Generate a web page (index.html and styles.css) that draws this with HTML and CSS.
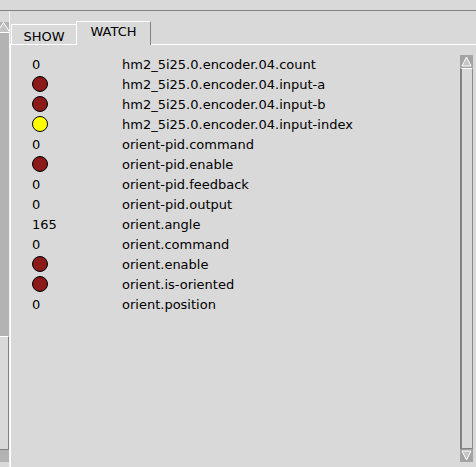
FILE: index.html
```html
<!DOCTYPE html>
<html lang="en">
<head>
<meta charset="UTF-8" />
<title>HAL Watch</title>
<link rel="stylesheet" href="styles.css">
</head>
<body>

<!-- Top strip -->
<div class="topbar"></div>

<div class="main">
  <!-- Left scrollbar (cut off) -->
  <div class="lscroll">
    <svg class="larrow" width="9" height="11" viewBox="0 0 9 11">
      <polygon points="3.5,0.5 -3,10.5 10,10.5" fill="#c4c4c4" stroke="#fff" stroke-width="1"/>
    </svg>
    <div class="ltrough">
      <div class="lslider"></div>
    </div>
    <div class="ldown"></div>
  </div>

  <!-- Notebook -->
  <div class="notebook">
    <div class="tabs">
      <div class="tab">SHOW</div>
      <div class="tab active">WATCH</div>
    </div>
    <div class="panel">
      <div class="list">
        <div class="row"><span class="val">0</span><span class="name">hm2_5i25.0.encoder.04.count</span></div>
        <div class="row"><span class="val"><i class="led red"></i></span><span class="name">hm2_5i25.0.encoder.04.input-a</span></div>
        <div class="row"><span class="val"><i class="led red"></i></span><span class="name">hm2_5i25.0.encoder.04.input-b</span></div>
        <div class="row"><span class="val"><i class="led yellow"></i></span><span class="name">hm2_5i25.0.encoder.04.input-index</span></div>
        <div class="row"><span class="val">0</span><span class="name">orient-pid.command</span></div>
        <div class="row"><span class="val"><i class="led red"></i></span><span class="name">orient-pid.enable</span></div>
        <div class="row"><span class="val">0</span><span class="name">orient-pid.feedback</span></div>
        <div class="row"><span class="val">0</span><span class="name">orient-pid.output</span></div>
        <div class="row"><span class="val">165</span><span class="name">orient.angle</span></div>
        <div class="row"><span class="val">0</span><span class="name">orient.command</span></div>
        <div class="row"><span class="val"><i class="led red"></i></span><span class="name">orient.enable</span></div>
        <div class="row"><span class="val"><i class="led red"></i></span><span class="name">orient.is-oriented</span></div>
        <div class="row"><span class="val">0</span><span class="name">orient.position</span></div>
      </div>

      <!-- Right scrollbar -->
      <div class="rscroll">
        <div class="arrow">
          <svg width="11" height="11" viewBox="0 0 11 11">
            <polygon points="5.5,1 1,10 10,10" fill="#c4c4c4" stroke="#fff" stroke-width="1"/>
          </svg>
        </div>
        <div class="rslider"></div>
        <div class="arrow">
          <svg width="11" height="11" viewBox="0 0 11 11">
            <polygon points="5.5,10 1,1 10,1" fill="#c4c4c4" stroke="#fff" stroke-width="1"/>
          </svg>
        </div>
      </div>
    </div>
  </div>
</div>

</body>
</html>
```

FILE: styles.css
```css
/* Reset and basics */
* {margin:0; padding:0; box-sizing:border-box;}
html, body {
  width: 476px;
  height: 467px;
  overflow: hidden;
  background: #d9d9d9;
  font-family: 'DejaVu Sans', sans-serif;
  font-size: 13px;
  color: #000;
}

/* Top strip */
.topbar {
  height: 11px;
  border-bottom: 1px solid #828282;
}

.main {
  display: flex;
  height: 456px;
}

/* Left scrollbar stub */
.lscroll {
  width: 10px;
  padding-top: 11px;
  display: flex;
  flex-direction: column;
  border-right: 1px solid #f4f4f4;
}
.larrow {
  display: block;
  background: #b3b3b3;
}
.ltrough {
  flex: 1;
  background: #b3b3b3;
  padding-top: 303px;
  padding-bottom: 12px;
  width: 9px;
}
.lslider {
  height: 114px;
  background: #d9d9d9;
  border-top: 1px solid #fff;
  border-right: 1px solid #828282;
  border-bottom: 1px solid #828282;
}
.ldown {
  height: 5px;
}

/* Notebook */
.notebook {
  flex: 1;
  display: flex;
  flex-direction: column;
  padding-top: 10px;
}
.tabs {
  display: flex;
  align-items: flex-end;
  height: 23px;
  padding-left: 1px;
}
.tab {
  height: 20px;
  width: 65px;
  padding-top: 4px;
  text-align: center;
  border-top: 1px solid #fff;
  border-left: 1px solid #fff;
  line-height: 15px;
}
.tab.active {
  height: 24px;
  width: 75px;
  padding-top: 2px;
  margin-bottom: -1px;
  background: #d9d9d9;
  border-right: 1px solid #828282;
  position: relative;
}

.panel {
  flex: 1;
  display: flex;
  border-top: 1px solid #fff;
  border-left: 1px solid #fff;
}

/* Watch list */
.list {
  flex: 1;
  padding-top: 9px;
  padding-left: 21px;
}
.row {
  display: flex;
  align-items: center;
  height: 20px;
}
.val {
  width: 90px;
  display: flex;
  align-items: center;
}
.led {
  display: block;
  width: 16px;
  height: 16px;
  border-radius: 50%;
  border: 1px solid #000;
}
.led.red { background: #8b1a1a; }
.led.yellow { background: #ffff00; }

/* Right scrollbar */
.rscroll {
  width: 13px;
  margin: 10px 3px 5px 0;
  display: flex;
  flex-direction: column;
}
.rscroll .arrow {
  height: 13px;
  background: #a3a3a3;
  display: flex;
  align-items: center;
  justify-content: center;
}
.rslider {
  flex: 1;
  border-left: 2px solid #828282;
  border-right: 1px solid #8a8a8a;
  border-bottom: 1px solid #828282;
  border-top: 1px solid #fff;
  background: #d9d9d9;
}
```
